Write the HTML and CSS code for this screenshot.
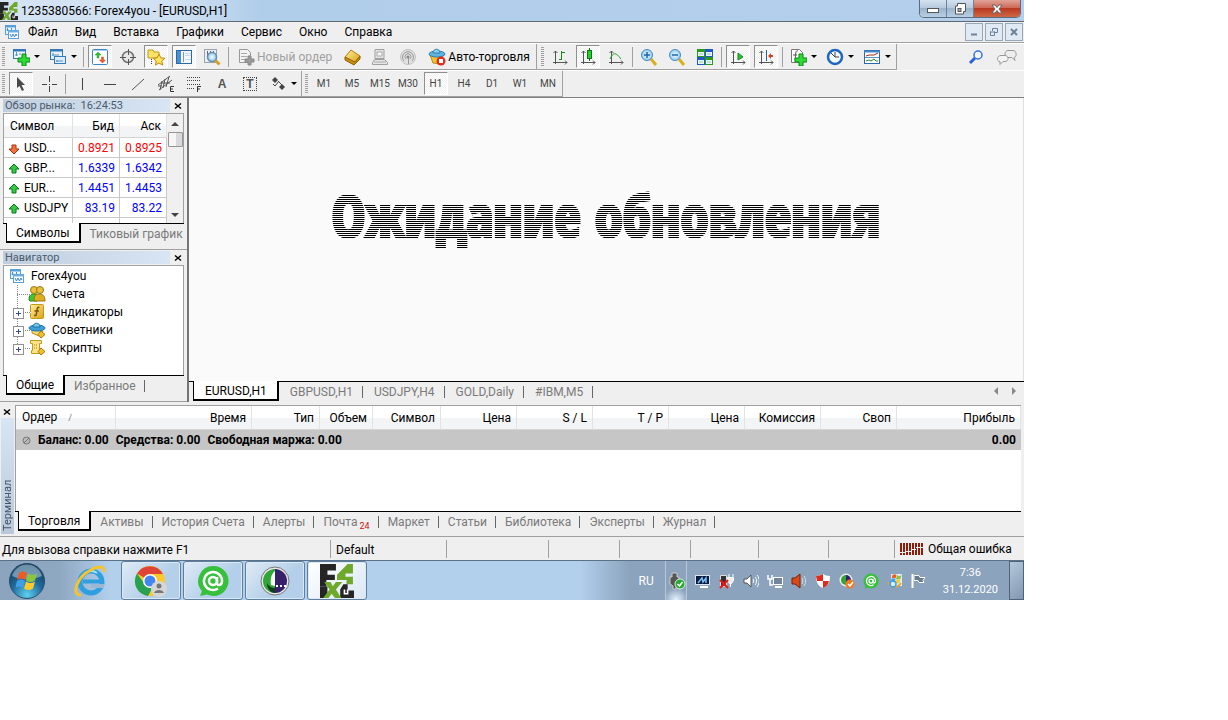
FILE: index.html
```
<!DOCTYPE html>
<html lang="ru">
<head>
	<meta charset="utf-8">
	<title>1235380566: Forex4you - [EURUSD,H1]</title>
	<link rel="stylesheet" href="styles.css">
</head>
<body>
	<svg class="defs" aria-hidden="true">
		<defs>
			<linearGradient id="gold" x1="0" y1="0" x2="1" y2="1"><stop offset="0" stop-color="#fff0a0"/><stop offset="1" stop-color="#dca010"/></linearGradient>
			<radialGradient id="orb" cx=".5" cy=".9" r=".9"><stop offset="0" stop-color="#5fd0f0"/><stop offset=".5" stop-color="#1f6a9c"/><stop offset="1" stop-color="#16354f"/></radialGradient>
			<radialGradient id="lens"><stop offset="0" stop-color="#f4fbff"/><stop offset="1" stop-color="#8ecbf0"/></radialGradient>
		</defs>
		<symbol id="charts" viewBox="0 0 16 16">
			<rect x="1.500" y="1.500" width="10" height="9" fill="#eef7ff" stroke="#5aa0d8"/><path d="M1 2.500h11" stroke="#5aa0d8" stroke-width="2"/>
			<path d="M3.500 4v3M2.500 6h2M7.500 4v2" stroke="#4a8fca"/>
			<rect x="4.500" y="6.500" width="10" height="8" fill="#fff" stroke="#5aa0d8"/><path d="M4 7.500h11" stroke="#6db0e4" stroke-width="2"/>
			<path d="M6 10l1.500 3 1.500-3 1.500 3 1.500-3 1 2" fill="none" stroke="#3f86c8"/>
		</symbol>
		<symbol id="fx" viewBox="0 0 32 32">
			<path d="M0 0h15v6H7v4h7v5H6v6H0z" fill="#252525"/>
			<path d="M16 10L26 0h5v9h-7v3h7v7h-6v-4h-9z" fill="#6fa92c"/>
			<path d="M0 21h7v11H0zM22 19h4v6h6v7H19v-8z" fill="#252525"/>
			<path d="M4 17h6l2 4 3-4h6l-6 7 5 8h-6l-3-4-3 4H3l6-8z" fill="#6fa92c"/>
			<path d="M23 24v4h3v-4" stroke="#fff" stroke-width="1.500" fill="none"/>
		</symbol>
		<symbol id="agent" viewBox="0 0 32 32">
			<path d="M16 1a15 15 0 1 1-6 28.500L3 31l2-5A15 15 0 0 1 16 1z" fill="#37c03c"/>
			<circle cx="16" cy="16" r="4" fill="none" stroke="#fff" stroke-width="2.500"/>
			<path d="M20 12v6c0 3 5 3 5-2a9 9 0 1 0-4 7.500" fill="none" stroke="#fff" stroke-width="2.500"/>
		</symbol>
		<symbol id="up" viewBox="0 0 12 12"><path d="M6 1l5 5H8v4H4V6H1z" fill="#35c845" stroke="#0b7a1b"/></symbol>
		<symbol id="down" viewBox="0 0 12 12"><path d="M6 11L1 6h3V2h4v4h3z" fill="#f4703c" stroke="#a8300c"/></symbol>
		<symbol id="cross" viewBox="0 0 8 8"><path d="M1 1.500l6 5M7 1.500l-6 5" stroke="#000" stroke-width="1.500"/></symbol>
		<symbol id="win" viewBox="0 0 22 20">
			<path d="M3 2c3-2 5-2 8 0L9 9C6 7 4 7 1 9z" fill="#ee5b24"/><path d="M12 2.500c3 2 6 2 9 0l-2 7c-3 2-6 2-9 0z" fill="#8cc63e"/>
			<path d="M1 10c3-2 5-2 8 0l-2 7c-3-2-5-2-8 0z" fill="#3f9fe8"/><path d="M10 10.500c3 2 6 2 9 0l-2 7c-3 2-6 2-9 0z" fill="#fccb2d"/>
		</symbol>
		<symbol id="axes" viewBox="0 0 18 18"><path d="M4.500 3v13M2 14.500h14M2.500 5l2-2 2 2M14 12.500l2 2-2 2" fill="none" stroke="#555"/></symbol>
	</svg>

	<div class="desktop">
		<header class="titlebar">
			<svg class="i18"><use href="#fx"/></svg>
			<span>1235380566: Forex4you - [EURUSD,H1]</span>
			<div class="winbuttons">
				<button aria-label="Свернуть"><svg width="14" height="10"><rect x="1.500" y="4.500" width="11" height="4" fill="#fff" stroke="#555"/></svg></button>
				<button aria-label="Развернуть"><svg width="14" height="14"><path d="M4.500 1.500h8v8h-2v2.500h-8v-8h2z" fill="#fff" stroke="#555"/><rect x="5" y="6.500" width="3" height="3" fill="#9ab4cc" stroke="#555"/></svg></button>
				<button class="close" aria-label="Закрыть"><svg width="12" height="10"><path d="M1 1h3l2 2.500L8 1h3L8 5l3 4H8L6 6.500 4 9H1l3-4z" fill="#fff" stroke="#666"/></svg></button>
			</div>
		</header>

		<nav class="menubar">
			<svg class="i16"><use href="#charts"/></svg>
			<button>Файл</button><button>Вид</button><button>Вставка</button><button>Графики</button><button>Сервис</button><button>Окно</button><button>Справка</button>
			<div class="mdi">
				<button aria-label="Свернуть окно"><svg width="8" height="8"><path d="M1 6.500h6" stroke="#6c8397" stroke-width="2"/></svg></button>
				<button aria-label="Восстановить окно"><svg width="8" height="8"><path d="M2.500 3V.500h5v4H5M0 4h5M.500 3.500v4h4v-4" fill="none" stroke="#6c8397"/></svg></button>
				<button aria-label="Закрыть окно"><svg width="8" height="8"><path d="M1 1l6 6M7 1L1 7" stroke="#6c8397" stroke-width="2"/></svg></button>
			</div>
		</nav>

		<div class="toolbar">
			<div class="group">
				<i class="grip"></i>
				<button class="drop"><svg class="i18" viewBox="0 0 18 18"><rect x="1.500" y="1.500" width="12" height="9" fill="#eef7ff" stroke="#3579b8"/><path d="M1 2.500h13" stroke="#3579b8" stroke-width="2"/><path d="M4.500 4v4M3 7h3M8 5v2" stroke="#5a92c4"/><path d="M10 6h4v4h4v4h-4v4h-4v-4H6v-4h4z" fill="#2edb35" stroke="#078a12"/></svg></button>
				<button class="drop"><svg class="i18" viewBox="0 0 18 18"><rect x="1.500" y="1.500" width="12" height="10" fill="#e4f1fc" stroke="#3579b8"/><path d="M1 2.500h13" stroke="#3579b8" stroke-width="2"/><path d="M4 5v3M3 7h7" stroke="#5a92c4"/><rect x="5.500" y="8.500" width="11" height="7" fill="#dcecfa" stroke="#3579b8"/><path d="M8 12v2M7 13h7" stroke="#5a92c4"/></svg></button>
				<i class="sep"></i>
				<button class="on"><svg class="i18" viewBox="0 0 18 18"><rect x="1.500" y="1.500" width="15" height="15" rx="1" fill="#fff" stroke="#3c86c8"/><path d="M2 2.500h14" stroke="#a9cdea"/><path d="M7 4l3 3H8v3H6V7H4z" fill="#28c428" stroke="#28a030" stroke-width=".5"/><path d="M11.500 15l-3-3h2V9h2v3h2z" fill="#f05830" stroke="#d84818" stroke-width=".5"/></svg></button>
				<button><svg class="i18" viewBox="0 0 18 18"><circle cx="9" cy="9" r="5.500" fill="#e6e6e6" stroke="#707070" stroke-width="1.500"/><path d="M9.500 1v6M9.500 11v6M1 9.500h6M11 9.500h6" stroke="#555"/></svg></button>
				<button class="on"><svg class="i18" viewBox="0 0 18 18"><path d="M1 2h5l1 2h5v6H1z" fill="#fbe36a" stroke="#c39a18"/><path d="M4.500 11v6" stroke="#444" stroke-dasharray="1 1"/><path d="M12 6l1.800 3.800 4 .5-3 2.700.8 4-3.600-2-3.600 2 .8-4-3-2.700 4-.5z" fill="#ffe45c" stroke="#bd8a10"/></svg></button>
				<button class="on"><svg class="i18" viewBox="0 0 18 18"><rect x="1.500" y="2.500" width="15" height="13" fill="#f2f8fe" stroke="#2b68a8"/><path d="M2 3h4v12H2z" fill="#4a90d0"/><path d="M8 5h1M8 7h1M8 9h1M8 11h1M8 13h1" stroke="#234"/><path d="M10 5.500h6M10 7.500h6M10 11.500h6" stroke="#c8dcf0"/></svg></button>
				<button><svg class="i18" viewBox="0 0 18 18"><rect x="1.500" y="1.500" width="12" height="13" fill="#e8eef4" stroke="#9aa4ae"/><path d="M4.500 3v6M7.500 3v4M10.500 3v4" stroke="#666"/><circle cx="9" cy="9" r="4.500" fill="url(#lens)" stroke="#6b8cae" stroke-width="1.500"/><path d="M12.500 12.500l4 4" stroke="#d8a020" stroke-width="3"/></svg></button>
				<i class="sep"></i>
				<button class="wide off"><svg class="i18" viewBox="0 0 18 18"><path d="M2.500 1.500h8l3 3v10h-11z" fill="#f2f2f2" stroke="#999"/><path d="M4 5.500h6M4 8.500h6M4 11.500h4" stroke="#a8a8a8"/><path d="M11 8h3v3h3v3h-3v3h-3v-3H8v-3h3z" fill="#9a9a9a" stroke="#888"/></svg>Новый ордер</button>
				<button><svg class="i18" viewBox="0 0 18 18"><path d="M8 2l9 6-5 7L2 9z" fill="url(#gold)" stroke="#b37e0a"/><path d="M2 9v3l9 5 6-6V8l-5 6z" fill="#c98d10" stroke="#8f6206"/></svg></button>
				<button><svg class="i18" viewBox="0 0 18 18"><path d="M4 1.500h9v9H4zM3.500 11.500h10l3 3v2h-15v-2z" fill="#e4e4e4" stroke="#a0a0a0"/><path d="M6 4h5v4H6zM3 14h12" fill="#f8f8f8" stroke="#aaa"/></svg></button>
				<button><svg class="i18" viewBox="0 0 18 18"><circle cx="9" cy="9" r="7.500" fill="#e0e0e0" stroke="#c2c2c2"/><path d="M5 13a5.500 5.500 0 1 1 8 0M7 11a3 3 0 1 1 4 0" fill="none" stroke="#999"/><circle cx="9" cy="9" r="1.500" fill="#888"/><path d="M9.500 10v6" stroke="#999"/></svg></button>
				<button class="wide"><svg class="i18" viewBox="0 0 18 18"><path d="M2 7h13l-2 9-8-1z" fill="#f1c232" stroke="#b88b14"/><ellipse cx="9" cy="6" rx="8" ry="3" fill="#5fb4e0" stroke="#2a7fb4"/><path d="M5 5c0-5 7-5 7 0z" fill="#8fd0f0" stroke="#2a7fb4"/><circle cx="13" cy="13" r="4.500" fill="#e0301c"/><rect x="11" y="11" width="4" height="4" fill="#fff"/></svg>Авто-торговля</button>
			</div>
			<div class="group">
				<i class="grip"></i>
				<button><svg class="i18" viewBox="0 0 18 18"><use href="#axes"/><path d="M10.500 3v9M8 11.500h2M11 4.500h3" stroke="#158a1d"/></svg></button>
				<button class="on"><svg class="i18" viewBox="0 0 18 18"><use href="#axes"/><path d="M10.500 0v13" stroke="#0a6a10"/><rect x="8.500" y="2.500" width="4" height="8" fill="#25cf30" stroke="#0a7a12"/></svg></button>
				<button><svg class="i18" viewBox="0 0 18 18"><use href="#axes"/><path d="M3 11c3-7 6-7 11 0" fill="none" stroke="#23a02c"/></svg></button>
				<i class="sep"></i>
				<button><svg class="i18" viewBox="0 0 18 18"><path d="M11 11l5 6" stroke="#d9b018" stroke-width="3"/><circle cx="7" cy="7" r="5.500" fill="url(#lens)" stroke="#4a88c4"/><path d="M4 7h6M7 4v6" stroke="#1d66ac" stroke-width="1.500"/></svg></button>
				<button><svg class="i18" viewBox="0 0 18 18"><path d="M11 11l5 6" stroke="#d9b018" stroke-width="3"/><circle cx="7" cy="7" r="5.500" fill="url(#lens)" stroke="#4a88c4"/><path d="M4 7h6" stroke="#1d66ac" stroke-width="1.500"/></svg></button>
				<button><svg class="i18" viewBox="0 0 18 18"><path d="M1 1h8v8H1zM9 9h8v8H9z" fill="#2a9a1c"/><path d="M9 1h8v8H9zM1 9h8v8H1z" fill="#2058c8"/><path d="M2 4h6v4H2zM10 4h6v4h-6zM2 12h6v4H2zM10 12h6v4h-6z" fill="#e8f4ff"/><path d="M3 6h4M11 6h4M3 14h4M11 14h4" stroke="#9cc89c"/></svg></button>
				<i class="sep"></i>
				<button class="on"><svg class="i18" viewBox="0 0 18 18"><use href="#axes"/><path d="M9 5l5 4-5 3z" fill="#2fbf35" stroke="#148a1c"/></svg></button>
				<button class="on"><svg class="i18" viewBox="0 0 18 18"><use href="#axes"/><path d="M9.500 2v11" stroke="#1c62b0"/><path d="M11 8l3-3v2h2v2h-2v2z" fill="#d8401c"/></svg></button>
				<i class="sep"></i>
				<button class="drop"><svg class="i18" viewBox="0 0 18 18"><path d="M2.500 1.500h8l3 3v10h-11z" fill="#fff" stroke="#777"/><path d="M9 3c-3-1-2 3-3 9M4 7h4" fill="none" stroke="#555"/><path d="M10 6h4v4h4v4h-4v4h-4v-4H6v-4h4z" fill="#2edb35" stroke="#078a12"/></svg></button>
				<button class="drop"><svg class="i18" viewBox="0 0 18 18"><circle cx="9" cy="9" r="7" fill="#f4faff" stroke="#1c66c0" stroke-width="2.500"/><path d="M9 4v5h4M5 5l4 4" fill="none" stroke="#444"/></svg></button>
				<button class="drop"><svg class="i18" viewBox="0 0 18 18"><rect x="1.500" y="2.500" width="15" height="13" fill="#fff" stroke="#2b68a8"/><path d="M1 3.500h16" stroke="#3f88cc" stroke-width="2"/><path d="M2 9.500h14" stroke="#5a92c4"/><path d="M3 8l3-1h3l2 0 4-2" fill="none" stroke="#a02818"/><path d="M3 13l3-1 2 1 3-2 2 2 2 0" fill="none" stroke="#228a28"/></svg></button>
			</div>
			<div class="right">
				<svg class="i18" viewBox="0 0 18 18"><path d="M7 10l-5 5" stroke="#2a62d8" stroke-width="3"/><circle cx="10" cy="7" r="4" fill="#f2f8ff" stroke="#3a70dc" stroke-width="1.500"/></svg>
				<svg width="22" height="18"><path d="M12 2.500h5c4 0 4 7 1 7l1 3-3-3h-4c-4 0-4-7 0-7z" fill="#eee" stroke="#999"/><path d="M5 7.500h4c4 0 4 6 0 6H7l-3 3v-3c-4 0-3-6 1-6z" fill="#f4f4f4" stroke="#999"/></svg>
			</div>
		</div>

		<div class="toolbar">
			<div class="group">
				<i class="grip"></i>
				<button class="on"><svg class="i18" viewBox="0 0 18 18"><path d="M5 2l8 8H9.500l2.500 5-2 1-2.500-5L5 13z" fill="#4a4a4a"/></svg></button>
				<button><svg class="i18" viewBox="0 0 18 18"><path d="M9.500 1v6M9.500 11v6M2 9.500h5M12 9.500h5M9 9.500h1" stroke="#444"/></svg></button>
				<i class="sep"></i>
				<button><svg class="i18" viewBox="0 0 18 18"><path d="M9.500 3v12" stroke="#444"/></svg></button>
				<button><svg class="i18" viewBox="0 0 18 18"><path d="M3 9.500h12" stroke="#444"/></svg></button>
				<button><svg class="i18" viewBox="0 0 18 18"><path d="M3 15L15 4" stroke="#555"/></svg></button>
				<button><svg class="i18" viewBox="0 0 18 18"><path d="M1 10l12-9M2 15L15 5M5 6l-2 9M8 4L6 13M12 2l-3 10M1 11h4M5 8h8" fill="none" stroke="#555"/><path d="M17 11.500h-3.500v5h3.500M14 14h2" fill="none" stroke="#333"/></svg></button>
				<button><svg class="i18" viewBox="0 0 18 18"><path d="M2 2.500h14M2 5.500h14M2 9.500h14M2 13.500h8" stroke="#444" stroke-dasharray="1 1"/><path d="M12.500 17v-5.500h3.500M12 14h3" fill="none" stroke="#333"/></svg></button>
				<button class="letter">A</button>
				<button class="letter boxed"><span>T</span></button>
				<button class="drop"><svg class="i18" viewBox="0 0 18 18"><path d="M6 2l3 3-3 3-3-3z" fill="#444"/><path d="M10 6l-4 5-2-2M9 6l4 4" fill="none" stroke="#444"/><path d="M13 9l3 3-3 3-3-3z" fill="#444"/></svg></button>
			</div>
			<div class="group tf">
				<i class="grip"></i>
				<button>M1</button><button>M5</button><button>M15</button><button>M30</button><button class="on">H1</button><button>H4</button><button>D1</button><button>W1</button><button>MN</button>
			</div>
		</div>

		<main class="workspace">
			<aside>
				<section class="panel">
					<h2><span>Обзор рынка: &nbsp;16:24:53</span><button aria-label="Закрыть"><svg width="8" height="8"><use href="#cross"/></svg></button></h2>
					<div class="market">
						<table>
							<thead><tr><th>Символ</th><th>Бид</th><th>Аск</th></tr></thead>
							<tbody>
								<tr class="fall"><td><svg class="i12"><use href="#down"/></svg>USD...</td><td>0.8921</td><td>0.8925</td></tr>
								<tr><td><svg class="i12"><use href="#up"/></svg>GBP...</td><td>1.6339</td><td>1.6342</td></tr>
								<tr><td><svg class="i12"><use href="#up"/></svg>EUR...</td><td>1.4451</td><td>1.4453</td></tr>
								<tr><td><svg class="i12"><use href="#up"/></svg>USDJPY</td><td>83.19</td><td>83.22</td></tr>
								<tr><td></td><td></td><td></td></tr>
							</tbody>
						</table>
						<div class="scroll"><i class="arr-up"></i><i class="thumb"></i><i class="arr-down"></i></div>
					</div>
					<div class="tabs"><button class="active">Символы</button><button class="last">Тиковый график</button></div>
				</section>
				<section class="panel">
					<h2><span>Навигатор</span><button aria-label="Закрыть"><svg width="8" height="8"><use href="#cross"/></svg></button></h2>
					<ul class="tree">
						<li class="root"><svg class="i16"><use href="#charts"/></svg>Forex4you</li>
						<li><i class="branch"></i><svg class="i18" viewBox="0 0 18 18"><path d="M1 15c0-5 2-6 4-6h4v7H2z" fill="#3cc832" stroke="#1c8a18"/><circle cx="6" cy="5" r="3.500" fill="#e8c23c" stroke="#9a7410"/><path d="M6 16c0-6 2-7 5-7s6 1 6 7z" fill="#dcae20" stroke="#9a7410"/><circle cx="12" cy="5" r="3.500" fill="#e8c23c" stroke="#9a7410"/></svg>Счета</li>
						<li><i class="branch plus"></i><svg class="i18" viewBox="0 0 18 18"><rect x="2.500" y="1.500" width="13" height="14" rx="1" fill="url(#gold)" stroke="#c39a18"/><path d="M11.500 4.500c-3-1-2 2-3.500 8H6M6.500 8H11" fill="none" stroke="#7a5608" stroke-width="1.500"/></svg>Индикаторы</li>
						<li><i class="branch plus"></i><svg class="i18" viewBox="0 0 18 18"><path d="M4 8h9l2 3-4 4-7-3z" fill="#f4d874" stroke="#b88b14"/><ellipse cx="9" cy="7" rx="8" ry="3" fill="#3f9fd4" stroke="#1f74aa"/><path d="M5 6c0-5 7-5 7 0z" fill="#7cc6ec" stroke="#1f74aa"/><path d="M13 10l4 3.500-4 3.500-3-3.500z" fill="#f0c030" stroke="#a87a0c"/></svg>Советники</li>
						<li><i class="branch plus end"></i><svg class="i18" viewBox="0 0 18 18"><path d="M2.500 1.500h11v3h-2v7l2 3h-10v-3h1v-7h-2z" fill="#fbe48a" stroke="#c39a18"/><path d="M6 6h4M6 9h4" stroke="#a87a0c" stroke-dasharray="1 1"/><path d="M13 9l4 3.500-4 3.500-3-3.500z" fill="#f0c030" stroke="#a87a0c"/></svg>Скрипты</li>
					</ul>
					<div class="tabs"><button class="active">Общие</button><button>Избранное</button></div>
				</section>
			</aside>
			<div class="charts">
				<div class="chart"><p>Ожидание обновления</p></div>
				<div class="tabs"><button class="active">EURUSD,H1</button><button>GBPUSD,H1</button><button>USDJPY,H4</button><button>GOLD,Daily</button><button>#IBM,M5</button><span class="pager"><i></i><i></i></span></div>
			</div>
		</main>

		<section class="terminal">
			<div class="side"><button aria-label="Закрыть"><svg width="8" height="8"><use href="#cross"/></svg></button><span>Терминал</span></div>
			<div class="body">
				<div class="orders">
					<table>
						<colgroup><col class="c100"><col class="c136"><col class="c68"><col class="c53"><col class="c68"><col class="c76"><col class="c76"><col class="c76"><col class="c76"><col class="c76"><col class="c76"><col></colgroup>
						<thead><tr><th>Ордер <small>∕</small></th><th>Время</th><th>Тип</th><th>Объем</th><th>Символ</th><th>Цена</th><th>S / L</th><th>T / P</th><th>Цена</th><th>Комиссия</th><th>Своп</th><th>Прибыль</th></tr></thead>
						<tbody><tr><td colspan="11"><svg width="9" height="9"><circle cx="4.500" cy="4.500" r="3.500" fill="#bbb" stroke="#777"/><path d="M2 7l5-5" stroke="#777"/></svg><span>Баланс: 0.00</span><span>Средства: 0.00</span><span>Свободная маржа: 0.00</span></td><td>0.00</td></tr></tbody>
					</table>
				</div>
				<div class="tabs"><button class="active">Торговля</button><button>Активы</button><button>История Счета</button><button>Алерты</button><button>Почта <sub>24</sub></button><button>Маркет</button><button>Статьи</button><button>Библиотека</button><button>Эксперты</button><button>Журнал</button></div>
			</div>
		</section>

		<div class="status">
			<span class="help">Для вызова справки нажмите F1</span>
			<span class="profile">Default</span>
			<span class="c102"></span><span class="c71"></span><span class="c71"></span><span class="c68"></span><span class="c70"></span><span class="c66"></span>
			<span class="conn"><svg width="23" height="12"><path d="M1 0v12M4 0v12M7 0v12M10 0v12M13 0v12M16 0v12M19 0v12M22 0v12" stroke="#901c0c" stroke-width="2"/><path d="M0 9.500h6M6 8.500h5M11 6.500h5M16 4.500h7" fill="none" stroke="#efefef"/></svg>Общая ошибка</span>
		</div>

		<footer class="taskbar">
			<button class="start" aria-label="Пуск"><svg width="38" height="38"><circle cx="19" cy="19" r="17.500" fill="url(#orb)" stroke="#284e6c"/><path d="M4 14a15.500 15.500 0 0 1 30 0c-8 4-22 4-30 0z" fill="#a8c8dc" opacity=".6"/><svg x="8" y="9" width="22" height="20"><use href="#win"/></svg></svg></button>
			<button class="pin" aria-label="Internet Explorer"><svg width="34" height="34"><circle cx="18" cy="18" r="11" fill="none" stroke="#2f9fe0" stroke-width="5"/><path d="M18 20h13v4H18z" fill="#9bb7d3"/><path d="M10 17.500h20" stroke="#2f9fe0" stroke-width="4"/><path d="M9 13a10 10 0 0 1 15-4" fill="none" stroke="#a4e0fa" stroke-width="2"/><path d="M8 31c-11 0-3-18 8-24 8-5 16-6 15 1" fill="none" stroke="#f5c42a" stroke-width="3"/></svg></button>
			<button class="app" aria-label="Chrome"><svg width="34" height="34"><circle cx="16" cy="17" r="15" fill="#fbc928"/><path d="M16 17L3 9.500A15 15 0 0 1 29 10H16z" fill="#df4434"/><path d="M3 9.500A15 15 0 0 0 14 32l6-11-10-2z" fill="#28a052"/><circle cx="16" cy="17" r="7" fill="#fff"/><circle cx="16" cy="17" r="5.500" fill="#4385f2"/><circle cx="25" cy="25" r="8" fill="#d6d6d6"/><circle cx="25" cy="22" r="2.500" fill="#777"/><path d="M20 29c1-4 9-4 10 0z" fill="#777"/></svg></button>
			<button class="app" aria-label="Агент"><svg width="32" height="32"><use href="#agent"/></svg></button>
			<button class="app" aria-label="MegaFon"><svg width="30" height="30"><circle cx="15" cy="15" r="14" fill="#e8e8ec" stroke="#777"/><path d="M15 3a12 12 0 0 0 0 24z" fill="#2fa638"/><path d="M15 3a12 12 0 0 1 0 24z" fill="#35206a"/><path d="M15 5c-4 3-5 9-4 14l4 1z" fill="#f4fff4"/><path d="M7 17c2 4 5 5 8 5v5c-4 0-8-4-8-10z" fill="#123c1a"/><path d="M16 20h2M20 20h2M24 20h2" stroke="#fff" stroke-width="2"/></svg></button>
			<button class="app current" aria-label="Forex4you"><svg width="34" height="34"><use href="#fx"/></svg></button>
			<div class="tray">
				<span class="lang">RU</span>
				<span class="usb"><svg width="18" height="18"><path d="M4 1h5v4h2v7l-3 2v3H5v-3l-3-2V5h2z" fill="#555" stroke="#ccc"/><circle cx="12" cy="12" r="5" fill="#27a836" stroke="#d8f4d8"/><path d="M9.500 12l2 2 3-4" fill="none" stroke="#fff" stroke-width="1.500"/></svg></span>
				<svg width="16" height="16"><rect x=".500" y="2.500" width="14" height="9" fill="#0a1a3c" stroke="#d8e4f0"/><path d="M3 10l4-5 1 4 3-4v5" fill="none" stroke="#78c0f8" stroke-width="1.500"/><path d="M5 14h8" stroke="#fff" stroke-width="2"/></svg>
				<svg width="16" height="16"><path d="M1.500 2.500h6v11h-6z" fill="#333" stroke="#ddd"/><path d="M10 1v3M14 1v3M8.500 4.500h6v3l-2 3h-2l-2-3zM11.500 10v4" fill="#eee" stroke="#fff"/><path d="M1 7l8 8M9 7l-8 8" stroke="#f01414" stroke-width="2"/></svg>
				<svg width="16" height="16"><path d="M1 6h3l4-4v12l-4-4H1z" fill="#fff" stroke="#555"/><path d="M10 6c1 1 1 3 0 4M12 4c2 2 2 6 0 8M14 2c3 4 3 8 0 12" fill="none" stroke="#fff"/></svg>
				<svg width="16" height="16"><path d="M1 2v4h4V2M3 6v6h3" fill="none" stroke="#fff" stroke-width="1.500"/><rect x="6.500" y="4.500" width="9" height="7" fill="#73859a" stroke="#fff"/><path d="M8 14h7" stroke="#fff" stroke-width="2"/></svg>
				<svg width="16" height="16"><path d="M1 5h3l5-4v14l-5-4H1z" fill="#d84a1c" stroke="#7c200a"/><path d="M11 5c1 2 1 4 0 6M13 3c2 3 2 7 0 10" fill="none" stroke="#ddd"/></svg>
				<svg width="16" height="16"><path d="M1 3c3 0 5-1 7-2 2 1 4 2 7 2 0 6-2 10-7 12C3 13 1 9 1 3z" fill="#fff"/><path d="M1 3c3 0 5-1 7-2v7H2zM8 8h6c-1 4-3 6-6 7z" fill="#e02c20"/></svg>
				<svg width="16" height="16"><circle cx="7" cy="7" r="6.500" fill="#eee"/><path d="M7 2a5 5 0 0 0 0 10z" fill="#2fa638"/><path d="M7 2a5 5 0 0 1 0 10z" fill="#35206a"/><circle cx="11" cy="11" r="4.500" fill="#f07828"/><path d="M9 11l2 2 3-4" fill="none" stroke="#fff" stroke-width="1.500"/></svg>
				<svg width="16" height="16"><use href="#agent"/></svg>
				<svg width="16" height="16"><rect x="4" y="1" width="11" height="12" fill="#dcecf8"/><svg x="4" y="1" width="11" height="10"><use href="#win"/></svg><path d="M1 9c1 6 9 7 13 1" fill="none" stroke="#f4a020" stroke-width="1.500"/><circle cx="6" cy="11" r="3" fill="none" stroke="#3fa4e8" stroke-width="1.500"/></svg>
				<svg width="16" height="16"><path d="M1.500 1v14" stroke="#fff" stroke-width="2"/><path d="M3 2.500h5l1 2h5l-2 3 1 2H8l-1-2H3z" fill="#687c92" stroke="#fff"/></svg>
				<time>7:36<br>31.12.2020</time>
				<button class="peek" aria-label="Свернуть все окна"></button>
			</div>
		</footer>
	</div>
</body>
</html>
```
FILE: styles.css
```
*{
	box-sizing: border-box;
}
body{
	margin: 0;
	background: #fff;
	font: 12px/16px Roboto, "Open Sans", sans-serif;
	color: #000;
}
button{
	border: 0;
	margin: 0;
	padding: 0;
	background: none;
	font: inherit;
	color: inherit;
	white-space: nowrap;
}
svg{
	display: block;
	flex: none;
}
.defs{
	position: absolute;
	width: 0;
	height: 0;
}
.i12{ width: 12px; height: 12px; }
.i16{ width: 16px; height: 16px; }
.i18{ width: 18px; height: 18px; }
.desktop{
	max-width: 1024px;
	background: #efefef;
}

/* title and menu */
.titlebar{
	display: flex;
	align-items: center;
	gap: 3px;
	height: 22px;
	background: linear-gradient(90deg, #d5e4f4, #cfe0f2 180px, #b0cdea 260px, #b3cfeb);
	border-bottom: 1px solid #5f6a75;
}
.winbuttons{
	display: flex;
	align-self: flex-start;
	margin-left: auto;
	margin-right: 3px;
	border: 1px solid #5b6c80;
	border-top: 0;
	border-radius: 0 0 5px 5px;
	overflow: hidden;
}
.winbuttons button{
	display: flex;
	align-items: center;
	justify-content: center;
	width: 27px;
	height: 17px;
	background: linear-gradient(#d5e2ef, #b4c8dc 50%, #9bb4cd 50%, #b8d0e6);
	border-right: 1px solid #6f8297;
}
.winbuttons button.close{
	width: 46px;
	border: 0;
	background: linear-gradient(#e0a398, #cf6a58 45%, #b93820 50%, #cf6844);
}
.menubar{
	display: flex;
	align-items: center;
	height: 21px;
	padding-left: 4px;
	border-bottom: 1px solid #a0a0a0;
}
.menubar > button{
	padding: 0 8px 0 9px;
}
.menubar .i16{
	margin-right: -1px;
}
.mdi{
	display: flex;
	gap: 2px;
	margin-left: auto;
	margin-right: 1px;
}
.mdi button{
	display: flex;
	align-items: center;
	justify-content: center;
	width: 18px;
	height: 18px;
	border: 1px solid #98a8b8;
	background: #dfeaf5;
}

/* toolbars */
.toolbar{
	display: flex;
	height: 27px;
	border-top: 1px solid #fff;
}
.group{
	display: flex;
	align-items: center;
	gap: 4px;
	padding: 0 2px;
	border-right: 1px solid #a0a0a0;
	border-bottom: 1px solid #a0a0a0;
}
.group + .group{
	padding-left: 4px;
}
.group button{
	display: flex;
	align-items: center;
	justify-content: center;
	width: 24px;
	height: 23px;
}
.group .on{
	border: 1px solid #909090;
	border-right-color: #fff;
	border-bottom-color: #fff;
	background: repeating-conic-gradient(#fff 0 25%, #f0f0f0 0 50%) 0 0 / 2px 2px;
}
.group .drop{
	width: 33px;
	gap: 4px;
}
.drop::after{
	content: "";
	border: 3px solid transparent;
	border-top-color: #000;
	border-bottom: 0;
}
.group .wide{
	width: auto;
	gap: 2px;
	padding: 0 4px;
}
.off{
	color: #a0a0a0;
}
.grip{
	width: 3px;
	height: 20px;
	background: repeating-linear-gradient(#a0a0a0 0 1px, #efefef 1px 2px);
}
.sep{
	width: 1px;
	height: 20px;
	background: #a0a0a0;
}
.toolbar .right{
	display: flex;
	align-items: center;
	gap: 10px;
	margin-left: auto;
	padding-right: 6px;
}
.group .letter{
	font: bold 12px/16px "Liberation Sans", sans-serif;
	color: #555;
}
.boxed span{
	padding: 0 2px;
	line-height: 12px;
	border: 1px dotted #444;
}
.group.tf{
	padding: 0 2px 0 3px;
	font-size: 10px;
	color: #444;
}

/* workspace */
.workspace{
	display: flex;
	height: 305px;
	border-top: 1px solid #808080;
}
aside{
	display: flex;
	flex-direction: column;
	width: 189px;
	flex: none;
	border-right: 2px solid #757575;
}
.panel{
	display: flex;
	flex-direction: column;
	height: 152px;
	padding: 0 3px 5px;
	border-bottom: 1px solid #a0a0a0;
}
.panel h2{
	display: flex;
	align-items: center;
	justify-content: space-between;
	flex: none;
	margin: 1px 0;
	height: 13px;
	font-size: 11px;
	font-weight: normal;
	color: #4b5a6c;
}
.panel h2 span{
	width: 167px;
	padding-left: 2px;
	line-height: 13px;
	background: linear-gradient(90deg, #bfcddd, #d7e5f4);
}
.panel h2 button{
	margin-right: 2px;
}
.market{
	display: flex;
	flex: 1;
	min-height: 0;
	overflow: hidden;
	background: #fff;
	border: 1px solid #a0a0a0;
	border-bottom: 0;
}
table{
	border-collapse: separate;
	border-spacing: 0;
	table-layout: fixed;
}
th{
	font-weight: normal;
	text-align: right;
	background: linear-gradient(#fff 50%, #f3f4f6 50%);
	border-right: 1px solid #e0e3e6;
	border-bottom: 1px solid #d5d5d5;
}
th:first-child{
	text-align: left;
}
.market table{
	width: 163px;
	height: 124px;
	flex: none;
}
.market th{
	width: 47px;
	height: 24px;
	padding: 0 5px;
}
.market th:first-child{
	width: 69px;
	padding-left: 6px;
}
.market td{
	height: 20px;
	padding: 0 4px;
	text-align: right;
	color: #00f;
	border-right: 1px solid #c8c8c8;
	border-bottom: 1px solid #c8c8c8;
}
.market .fall td{
	color: #f00;
}
.market tr td:first-child{
	padding-left: 20px;
	text-align: left;
	color: #000;
}
.market td svg{
	float: left;
	margin: 3px 0 0 -16px;
}
.scroll{
	display: flex;
	flex-direction: column;
	align-items: center;
	flex: 1;
	padding: 8px 0 6px;
	background: #f0f0f0;
}
.arr-up, .arr-down{
	border: 4px solid transparent;
}
.arr-up{ border-bottom-color: #444; border-top: 0; }
.arr-down{ border-top-color: #444; border-bottom: 0; margin-top: auto; }
.thumb{
	width: 15px;
	height: 15px;
	margin-top: 6px;
	border: 1px solid #959595;
	border-radius: 1px;
	background: linear-gradient(90deg, #f6f6f6 50%, #d9d9dc 50%);
}
.tree{
	flex: 1;
	margin: 0;
	padding: 1px 5px;
	list-style: none;
	background: #fff;
	border: 1px solid #a0a0a0;
	border-bottom: 0;
}
.tree li{
	display: flex;
	align-items: center;
	gap: 6px;
	height: 18px;
}
.branch{
	position: relative;
	width: 14px;
	height: 18px;
	margin-left: 8px;
	background:
		repeating-linear-gradient(90deg, #888 0 1px, #fff 1px 2px) 0 9px / 14px 1px no-repeat,
		repeating-linear-gradient(#888 0 1px, #fff 1px 2px) 0 0 / 1px 18px no-repeat;
}
.branch.end{
	background-size: 14px 1px, 1px 9px;
}
.tree .branch + svg{
	margin-left: -9px;
}
.plus::before{
	content: "";
	position: absolute;
	left: -4px;
	top: 5px;
	width: 9px;
	height: 9px;
	border: 1px solid #919191;
	background:
		linear-gradient(#3a4c90, #3a4c90) center / 5px 1px no-repeat,
		linear-gradient(#3a4c90, #3a4c90) center / 1px 5px no-repeat,
		#fff;
}
.charts{
	display: flex;
	flex-direction: column;
	flex: 1;
	min-width: 0;
}
.chart{
	flex: 1;
	background: #fafafa;
	border-right: 1px solid #e0e0e0;
}
.chart p{
	margin: 84px 0 0;
	font: bold 57px/66px "Liberation Sans Narrow", "Arial Narrow", "Open Sans Condensed", "Roboto Condensed", "DejaVu Sans Condensed", sans-serif;
	text-align: center;
	white-space: nowrap;
	color: transparent;
	-webkit-text-stroke: 3px transparent;
	background: repeating-linear-gradient(#fafafa 0 1px, #000 1px 2px);
	-webkit-background-clip: text;
	background-clip: text;
}

/* tabs, shared by all panels */
.tabs{
	display: flex;
	align-items: flex-start;
	flex: none;
	height: 21px;
	padding-left: 3px;
	border-top: 1px solid #000;
	color: #7a7a7a;
}
.tabs button{
	position: relative;
	height: 19px;
	padding: 0 9px;
	line-height: 18px;
}
.tabs button:not(.active):not(.last)::after{
	content: "";
	position: absolute;
	right: 0;
	top: 4px;
	height: 12px;
	border-right: 1px solid #666;
}
.tabs .active{
	height: 20px;
	margin-top: -1px;
	padding-top: 1px;
	color: #000;
	background: #fff;
	border: solid #000;
	border-width: 0 2px 2px 1px;
}
.charts .tabs{
	padding-left: 4px;
}
.charts .tabs button{
	padding-left: 11px;
	padding-right: 10px;
}
.pager{
	display: flex;
	gap: 14px;
	margin: 5px 8px 0 auto;
}
.pager i{
	border: 4px solid transparent;
	border-right-color: #888;
	border-left: 0;
}
.pager i + i{
	border-right: 0;
	border-left: 4px solid #888;
}

/* terminal */
.terminal{
	display: flex;
	height: 135px;
	padding-top: 3px;
}
.side{
	display: flex;
	flex-direction: column;
	width: 15px;
	flex: none;
	padding: 1px 1px 3px;
}
.side button{
	height: 12px;
	padding-left: 2px;
}
.side span{
	flex: 1;
	padding-top: 3px;
	writing-mode: vertical-rl;
	transform: rotate(180deg);
	line-height: 13px;
	font-size: 11px;
	color: #44546a;
	background: linear-gradient(#bac9da, #d7e5f4);
}
.body{
	display: flex;
	flex-direction: column;
	flex: 1;
	min-width: 0;
	padding-right: 3px;
}
.orders{
	flex: 1;
	background: #fff;
	border: 1px solid #a0a0a0;
	border-width: 1px 0 0 1px;
}
.orders table{
	width: 100%;
}
.orders th{
	height: 24px;
	padding: 0 5px;
}
.orders th:first-child{
	padding-left: 6px;
}
.orders small{
	margin-left: 8px;
	color: #888;
}
.orders td{
	height: 20px;
	padding: 0 5px 0 6px;
	font-weight: bold;
	text-align: right;
	background: #c6c6c6;
}
.orders td:first-child{
	text-align: left;
}
.orders td svg{
	display: inline-block;
	margin-right: 7px;
	vertical-align: -1px;
}
.orders td span{
	margin-right: 7px;
}
.c53{ width: 53px; }
.c66{ width: 66px; }
.c68{ width: 68px; }
.c70{ width: 70px; }
.c71{ width: 71px; }
.c76{ width: 76px; }
.c100{ width: 100px; }
.c102{ width: 102px; }
.c136{ width: 136px; }
.terminal .tabs{
	height: 26px;
}
.tabs sub{
	margin-left: -1px;
	font-size: 9px;
	line-height: 8px;
	color: #d01010;
}

/* status */
.status{
	display: flex;
	align-items: center;
	height: 24px;
	margin-top: -1px;
	border-top: 1px solid #a0a0a0;
}
.status span{
	height: 18px;
	padding-left: 5px;
	line-height: 20px;
	border-left: 1px solid #a0a0a0;
	white-space: nowrap;
}
.status .help{
	width: 330px;
	padding-left: 2px;
	border: 0;
}
.profile{
	width: 116px;
}
.status .conn{
	display: flex;
	align-items: center;
	gap: 5px;
}

/* taskbar */
.taskbar{
	display: flex;
	align-items: center;
	height: 40px;
	border-top: 1px solid #5c7289;
	background: linear-gradient(90deg, #8ba3bc, #8fa8c2 60px, #b2cfec 110px, #b2cfec 580px, #8ba3bd 630px);
}
.start{
	margin: 0 16px 0 8px;
}
.pin{
	margin: 0 14px 0 11px;
}
.app{
	display: flex;
	align-items: center;
	justify-content: center;
	width: 60px;
	height: 39px;
	margin-right: 2px;
	border: 1px solid #5f7f9f;
	border-radius: 3px;
	background: linear-gradient(135deg, #e0ebf6, #b4cfe9 60%);
	box-shadow: inset 0 0 0 1px #dbe9f6;
}
.current{
	background: linear-gradient(135deg, #fff, #dbe8f5);
}
.tray{
	display: flex;
	align-items: center;
	gap: 8px;
	margin-left: auto;
	height: 100%;
	color: #fff;
}
.lang{
	margin-right: 3px;
}
.usb{
	display: flex;
	align-items: center;
	height: 100%;
	padding-left: 2px;
	border: solid #b8c8d8;
	border-width: 0 1px;
	background: radial-gradient(circle at bottom, #e8f4ff, transparent 12px);
}
.tray time{
	margin-left: 8px;
	font-size: 11px;
	text-align: center;
	line-height: 17px;
}
.peek{
	width: 15px;
	height: 39px;
	margin-left: 3px;
	border: 1px solid #4f6379;
	background: linear-gradient(135deg, #b6c8da, #7f98b2);
}
```
